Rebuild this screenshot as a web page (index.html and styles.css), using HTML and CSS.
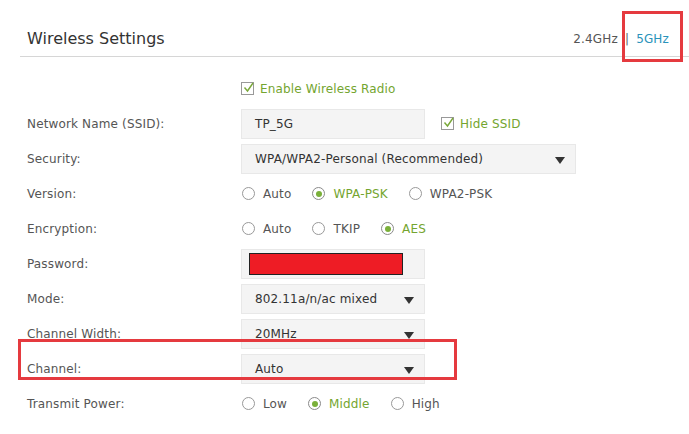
FILE: index.html
```html
<!DOCTYPE html>
<html>
<head>
<meta charset="utf-8">
<link rel="stylesheet" href="styles.css">
</head>
<body>
<div class="panel">
  <div class="header">
    <h1 class="title">Wireless Settings</h1>
    <div class="bands">
      <span class="band">2.4GHz</span>
      <span class="sep">|</span>
      <span class="band active">5GHz</span>
    </div>
  </div>
  <div class="form">
    <div class="row">
      <div class="label"></div>
      <div class="field"><span class="check"><span class="box"><svg viewBox="0 0 13 13" width="13" height="13"><path d="M2.5 6.5 L5.5 10 L11 2" fill="none" stroke="#7aa83a" stroke-width="1.4"/></svg></span><span class="green">Enable Wireless Radio</span></span></div>
    </div>
    <div class="row">
      <div class="label">Network Name (SSID):</div>
      <div class="field">
        <div class="input short">TP_5G</div>
        <span class="check hide"><span class="box"><svg viewBox="0 0 13 13" width="13" height="13"><path d="M2.5 6.5 L5.5 10 L11 2" fill="none" stroke="#7aa83a" stroke-width="1.4"/></svg></span><span class="green">Hide SSID</span></span>
      </div>
    </div>
    <div class="row">
      <div class="label">Security:</div>
      <div class="field"><div class="input select long">WPA/WPA2-Personal (Recommended)<span class="arrow"></span></div></div>
    </div>
    <div class="row">
      <div class="label">Version:</div>
      <div class="field radios">
        <span class="radio"><span class="dot"></span>Auto</span>
        <span class="radio on"><span class="dot"></span>WPA-PSK</span>
        <span class="radio"><span class="dot"></span>WPA2-PSK</span>
      </div>
    </div>
    <div class="row">
      <div class="label">Encryption:</div>
      <div class="field radios">
        <span class="radio"><span class="dot"></span>Auto</span>
        <span class="radio"><span class="dot"></span>TKIP</span>
        <span class="radio on"><span class="dot"></span>AES</span>
      </div>
    </div>
    <div class="row">
      <div class="label">Password:</div>
      <div class="field"><div class="input short pw"><span class="redact"></span></div></div>
    </div>
    <div class="row">
      <div class="label">Mode:</div>
      <div class="field"><div class="input select short">802.11a/n/ac mixed<span class="arrow"></span></div></div>
    </div>
    <div class="row">
      <div class="label">Channel Width:</div>
      <div class="field"><div class="input select short">20MHz<span class="arrow"></span></div></div>
    </div>
    <div class="row highlight">
      <div class="label">Channel:</div>
      <div class="field"><div class="input select short">Auto<span class="arrow"></span></div></div>
      <div class="mark mark-row"></div>
    </div>
    <div class="row">
      <div class="label">Transmit Power:</div>
      <div class="field radios">
        <span class="radio"><span class="dot"></span>Low</span>
        <span class="radio on"><span class="dot"></span>Middle</span>
        <span class="radio"><span class="dot"></span>High</span>
      </div>
    </div>
  </div>
  <div class="mark mark-band"></div>
</div>
</body>
</html>
```
FILE: styles.css
```css
* { box-sizing: border-box; }
html, body { margin: 0; padding: 0; background: #fff; }
body {
  width: 689px;
  height: 434px;
  overflow: hidden;
  font-family: "DejaVu Sans", Verdana, sans-serif;
  font-size: 12px;
  letter-spacing: 0.15px;
  color: #444;
}
.panel { position: relative; width: 689px; height: 434px; }
.header {
  margin-left: 20px;
  padding: 28px 20px 6px 7px;
  border-bottom: 1px solid #d6d6d6;
  display: flex;
  align-items: center;
  justify-content: space-between;
  height: 57px;
}
.title {
  margin: 0;
  font-weight: normal;
  font-size: 16px;
  letter-spacing: 0;
  color: #333;
  line-height: 22px;
}
.bands { display: flex; gap: 7px; font-size: 12px; color: #555; line-height: 22px; }
.sep { color: #666; }
.active { color: #2a93bb; }
.form { padding-top: 14px; padding-left: 27px; }
.row {
  position: relative;
  display: grid;
  grid-template-columns: 214px 1fr;
  height: 35px;
  align-items: center;
}
.label { color: #555; }
.field { display: flex; align-items: center; }
.green { color: #74a52f; }
.check { display: inline-flex; align-items: center; gap: 6px; }
.check.hide { margin-left: 16px; }
.box {
  width: 13px; height: 13px;
  border: 1px solid #999;
  position: relative;
  display: inline-block;
}
.box svg { position: absolute; left: 0; top: -2px; }
.input {
  height: 30px;
  background: #f4f4f4;
  border: 1px solid #e8e8e8;
  display: flex;
  align-items: center;
  padding-left: 13px;
  color: #333;
  position: relative;
}
.short { width: 184px; }
.long { width: 335px; }
.arrow {
  position: absolute;
  right: 10px;
  top: 12px;
  width: 0; height: 0;
  border-left: 5.5px solid transparent;
  border-right: 5.5px solid transparent;
  border-top: 7px solid #333;
}
.pw { padding-left: 7px; }
.redact {
  width: 154px; height: 22px;
  background: #ee1c25;
  border: 1.5px solid #222;
}
.radios { gap: 0; }
.radio { display: inline-flex; align-items: center; margin-right: 20px; color: #555; }
.radio .dot {
  width: 13px; height: 13px;
  border: 1px solid #999;
  border-radius: 50%;
  margin-right: 8px;
  margin-left: 1px;
  position: relative;
  background: #fff;
}
.radio.on { color: #74a52f; }
.radio.on .dot { border-color: #8a8a8a; }
.radio.on .dot::after {
  content: "";
  position: absolute;
  left: 2.5px; top: 2.5px;
  width: 6px; height: 6px;
  border-radius: 50%;
  background: #7ab03a;
}
.mark { position: absolute; border: 3px solid #e53a3f; pointer-events: none; }
.mark-row { left: -9px; top: -12px; width: 439px; height: 41px; }
.mark-band { left: 622px; top: 11px; width: 61px; height: 51px; }
```
